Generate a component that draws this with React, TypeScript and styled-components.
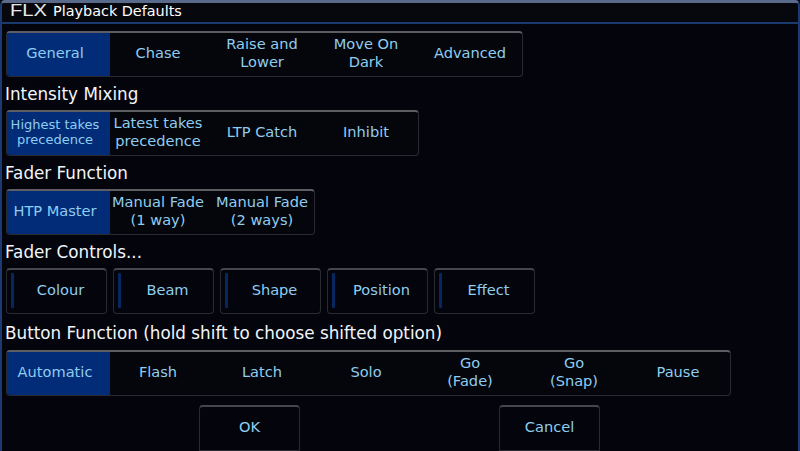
import styled, { createGlobalStyle } from 'styled-components';

const GlobalStyle = createGlobalStyle`
  html, body {
    margin: 0;
    padding: 0;
    background: #04050c;
  }
`;

interface SegmentOption {
  label: string[];
  small?: boolean;
}

const toOptions = (labels: string[][]): SegmentOption[] => labels.map((label) => ({ label }));

const tabs = toOptions([['General'], ['Chase'], ['Raise and', 'Lower'], ['Move On', 'Dark'], ['Advanced']]);
const mixing: SegmentOption[] = [
  { label: ['Highest takes', 'precedence'], small: true },
  ...toOptions([['Latest takes', 'precedence'], ['LTP Catch'], ['Inhibit']]),
];
const fader = toOptions([['HTP Master'], ['Manual Fade', '(1 way)'], ['Manual Fade', '(2 ways)']]);
const buttons = toOptions([['Automatic'], ['Flash'], ['Latch'], ['Solo'], ['Go', '(Fade)'], ['Go', '(Snap)'], ['Pause']]);
const controls = ['Colour', 'Beam', 'Shape', 'Position', 'Effect'];

function Segments({ options, width }: { options: SegmentOption[]; width: number }) {
  return (
    <SegmentBar $width={width}>
      {options.map((option, i) => (
        <Segment key={option.label.join()} $active={i === 0} $small={option.small}>
          {option.label.map((line) => (
            <span key={line}>{line}</span>
          ))}
        </Segment>
      ))}
    </SegmentBar>
  );
}

export default function App() {
  return (
    <>
      <GlobalStyle />
      <Window>
        <TitleBar>
          <Logo>FLX</Logo>
          <Title>Playback Defaults</Title>
        </TitleBar>
        <Body>
          <Segments options={tabs} width={517} />
          <Heading>Intensity Mixing</Heading>
          <Segments options={mixing} width={413} />
          <Heading>Fader Function</Heading>
          <Segments options={fader} width={309} />
          <Heading>Fader Controls...</Heading>
          <ToggleRow>
            {controls.map((name) => (
              <Toggle key={name}>
                <Led />
                {name}
              </Toggle>
            ))}
          </ToggleRow>
          <Heading $tall>Button Function (hold shift to choose shifted option)</Heading>
          <Segments options={buttons} width={725} />
          <Footer>
            <FooterButton>OK</FooterButton>
            <FooterButton>Cancel</FooterButton>
          </Footer>
        </Body>
      </Window>
    </>
  );
}

const Window = styled.div`
  box-sizing: border-box;
  width: 800px;
  height: 451px;
  overflow: hidden;
  display: flex;
  flex-direction: column;
  background: #04050c;
  border-top: 3px solid #5a6a8a;
  border-left: 2px solid #1c3a72;
  border-right: 2px solid #1c3a72;
  border-radius: 5px 5px 0 0;
  font-family: 'DejaVu Sans', Verdana, sans-serif;
  color: #8fcdf0;
`;

const TitleBar = styled.div`
  box-sizing: border-box;
  flex: none;
  height: 21px;
  display: flex;
  align-items: center;
  gap: 5px;
  padding: 0 0 4px 8px;
  border-bottom: 2px solid #1c3a72;
  background: #07080e;
`;

const Logo = styled.span`
  width: 38px;
  font-family: 'Liberation Sans', Arial, sans-serif;
  font-size: 16px;
  line-height: 15px;
  color: #e8e8e8;
  transform: scaleX(1.26);
  transform-origin: left center;
`;

const Title = styled.span`
  font-size: 14.4px;
  color: #ffffff;
`;

const Body = styled.div`
  display: flex;
  flex-direction: column;
  align-items: flex-start;
  padding: 7px 0 0 4px;
`;

const Heading = styled.div<{ $tall?: boolean }>`
  box-sizing: border-box;
  height: ${({ $tall }) => ($tall ? 36 : 33)}px;
  padding-top: ${({ $tall }) => ($tall ? 2 : 0)}px;
  display: flex;
  align-items: center;
  margin-left: -1px;
  font-size: 16.8px;
  color: #f2f6fa;
`;

const SegmentBar = styled.div<{ $width: number }>`
  box-sizing: border-box;
  width: ${({ $width }) => $width}px;
  height: 46px;
  display: flex;
  overflow: hidden;
  background: #05060b;
  border: 1px solid #2a2b30;
  border-top: 2px solid #5e5e62;
  border-radius: 4px;
`;

const Segment = styled.div<{ $active: boolean; $small?: boolean }>`
  flex: 1 1 0;
  display: flex;
  flex-direction: column;
  align-items: center;
  justify-content: center;
  padding-bottom: 3px;
  font-size: ${({ $small }) => ($small ? 13 : 14.6)}px;
  line-height: ${({ $small }) => ($small ? 15 : 18)}px;
  white-space: nowrap;
  background: ${({ $active }) => ($active ? '#022c78' : 'transparent')};

  &:first-child {
    flex: none;
    box-sizing: border-box;
    width: 103px;
    padding-right: 7px;
  }

  &:nth-child(2) {
    margin-left: -4px;
  }
`;

const ToggleRow = styled.div`
  display: flex;
  gap: 6px;
`;

const Toggle = styled.div`
  position: relative;
  box-sizing: border-box;
  width: 101px;
  height: 46px;
  display: flex;
  align-items: center;
  justify-content: center;
  padding: 0 0 5px 8px;
  font-size: 14.6px;
  border: 1px solid #2a2b30;
  border-top: 2px solid #47474b;
  border-radius: 4px;
`;

const Led = styled.span`
  position: absolute;
  left: 4px;
  top: 3px;
  bottom: 5px;
  width: 3px;
  border-radius: 1px;
  background: #06275f;
`;

const Footer = styled.div`
  display: flex;
  gap: 199px;
  margin: 9px 0 0 193px;
`;

const FooterButton = styled.div`
  box-sizing: border-box;
  width: 101px;
  height: 46px;
  padding-bottom: 5px;
  display: flex;
  align-items: center;
  justify-content: center;
  font-size: 14.6px;
  border: 1px solid #2a2b30;
  border-top: 2px solid #47474b;
  border-radius: 4px 4px 0 0;
`;
